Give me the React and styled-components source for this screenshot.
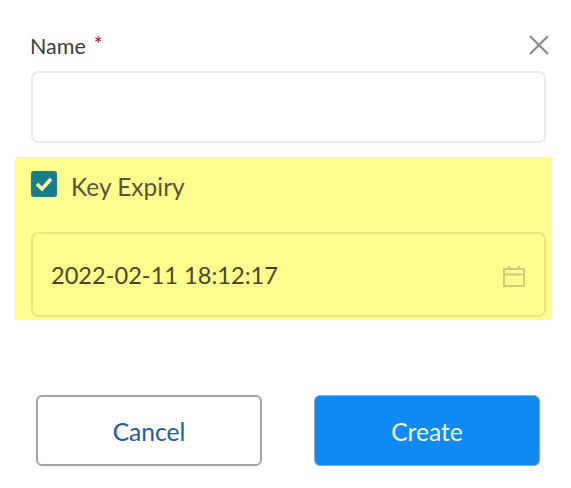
import React from 'react';
import styled, {createGlobalStyle} from 'styled-components';

const GlobalStyle = createGlobalStyle`
  html, body {
    margin: 0;
    padding: 0;
    background: #fff;
    font-family: Lato, "Open Sans", sans-serif;
  }
`

const Dialog = styled.div`
  width: 571px;
  height: 488px;
  padding-top: 31px;
  box-sizing: border-box;
  overflow: hidden;
`

const Header = styled.div`
  display: flex;
  justify-content: space-between;
  align-items: flex-start;
  height: 40px;
  padding: 0 21px 0 30px;
`

const Label = styled.label`
  font-size: 21.5px;
  line-height: 26px;
  color: #3c3c3c;
`

const Required = styled.span`
  margin-left: 8px;
  color: #b8102a;
  font-size: 21px;
  vertical-align: 2px;
`

const CloseButton = styled.button`
  width: 22px;
  height: 22px;
  margin-top: 3px;
  padding: 0;
  border: 0;
  background: none;
  color: #8a8a8a;
  svg { display: block; }
`

const TextBox = styled.div`
  width: 515px;
  height: ${props => props.height}px;
  margin-left: 31px;
  box-sizing: border-box;
  border: 2px solid ${props => props.highlighted ? '#e9e67f' : '#eaeaea'};
  border-radius: 7px;
  display: flex;
  align-items: center;
  justify-content: space-between;
  padding: 0 18px;
  background: transparent;
`

const Highlight = styled.section`
  width: 537px;
  height: 163px;
  margin: 14px 0 0 15px;
  padding-top: 14px;
  box-sizing: border-box;
  background: #fffd8d;
  ${TextBox} {
    margin: 35px 0 0 16px;
  }
`

const CheckRow = styled.div`
  display: flex;
  align-items: center;
  gap: 14px;
  height: 26px;
  padding-left: 16px;
`

const CheckBox = styled.span`
  width: 26px;
  height: 26px;
  border-radius: 3px;
  background: #137f8b;
  display: flex;
  align-items: center;
  justify-content: center;
`

const CheckLabel = styled.span`
  font-size: 24.5px;
  line-height: 30px;
  margin-top: 6px;
  color: #55553a;
`

const DateValue = styled.span`
  font-size: 23.6px;
  color: #46462f;
`

const CalendarSvg = styled.svg`
  margin-top: 2px;
`

const Actions = styled.div`
  display: flex;
  gap: 52px;
  margin: 75px 0 0 36px;
`

const Button = styled.button`
  width: 226px;
  height: 71px;
  box-sizing: border-box;
  border-radius: 6px;
  border: ${props => props.primary ? '1px solid #9aa7b2' : '2px solid #a3a3a3'};
  background: ${props => props.primary ? '#1189f5' : '#fff'};
  color: ${props => props.primary ? '#f4f9ff' : '#205ba8'};
  font-family: Lato, "Open Sans", sans-serif;
  font-size: 24.6px;
  padding: 2px 0 0;
`

const CloseIcon = () => (
  <svg width="22" height="22" viewBox="0 0 22 22" fill="none" stroke="currentColor" strokeWidth="2.2">
    <path d="M2 2L20 20M20 2L2 20" />
  </svg>
)

const CheckIcon = () => (
  <svg width="18" height="16" viewBox="0 0 18 16" fill="none" stroke="#fdfbb0" strokeWidth="3.6">
    <path d="M2 8L7 13L16 3" />
  </svg>
)

const CalendarIcon = () => (
  <CalendarSvg width="24" height="24" viewBox="0 0 24 24" fill="none" stroke="#cfcb7c" strokeWidth="2">
    <path d="M2 5H22V22H2ZM2 10.5H22M7 2V6M17 2V6" />
  </CalendarSvg>
)

export default function App() {
  return (
    <Dialog>
      <GlobalStyle />
      <Header>
        <Label>Name<Required>*</Required></Label>
        <CloseButton aria-label="Close"><CloseIcon /></CloseButton>
      </Header>
      <TextBox height={72} />
      <Highlight>
        <CheckRow>
          <CheckBox><CheckIcon /></CheckBox>
          <CheckLabel>Key Expiry</CheckLabel>
        </CheckRow>
        <TextBox height={85} highlighted>
          <DateValue>2022-02-11 18:12:17</DateValue>
          <CalendarIcon />
        </TextBox>
      </Highlight>
      <Actions>
        <Button>Cancel</Button>
        <Button primary>Create</Button>
      </Actions>
    </Dialog>
  )
}
